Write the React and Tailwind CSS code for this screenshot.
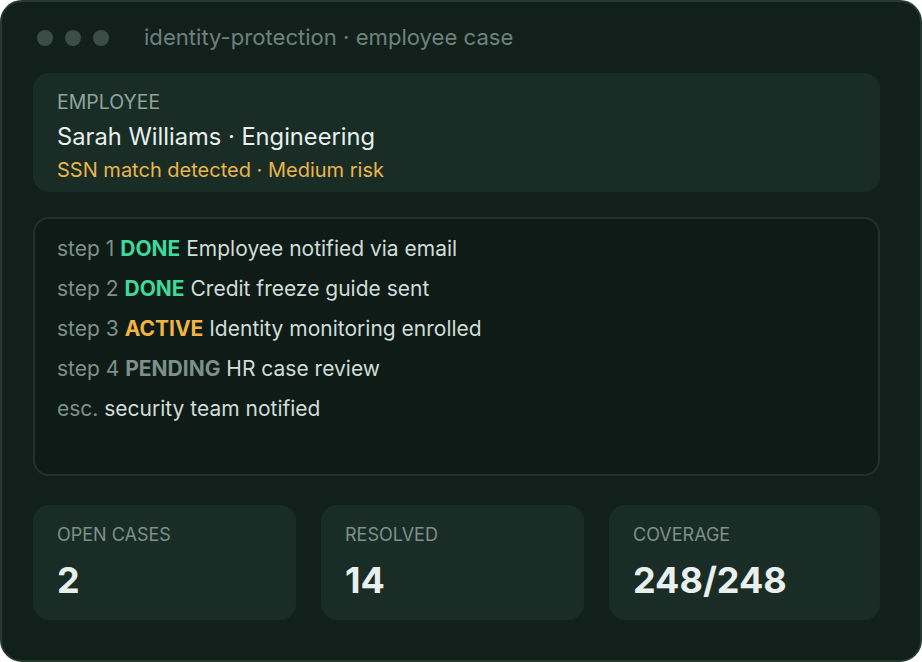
export default function App() {
  const steps = [
    { tag: "step 1", status: "DONE", tone: "text-[#3fd99a]", text: "Employee notified via email" },
    { tag: "step 2", status: "DONE", tone: "text-[#3fd99a]", text: "Credit freeze guide sent" },
    { tag: "step 3", status: "ACTIVE", tone: "text-[#f2b544]", text: "Identity monitoring enrolled" },
    { tag: "step 4", status: "PENDING", tone: "text-[#7c918a]", text: "HR case review" },
    { tag: "esc.", status: null, tone: "", text: "security team notified" },
  ];
  const stats = [
    { label: "OPEN CASES", value: "2" },
    { label: "RESOLVED", value: "14" },
    { label: "COVERAGE", value: "248/248" },
  ];
  return (
    <div className="w-[922px] h-[662px] bg-white font-['Inter',sans-serif]">
      <div className="w-full h-full rounded-[22px] border-2 border-[#25392f] bg-[#11201b] pl-[31px] pr-[40px] flex flex-col">
        {/* window chrome */}
        <div className="h-[71px] flex items-center">
          <div className="flex gap-[12px] pl-[4px]">
            <span className="w-[16px] h-[16px] rounded-full bg-[#3a4d47]" />
            <span className="w-[16px] h-[16px] rounded-full bg-[#3a4d47]" />
            <span className="w-[16px] h-[16px] rounded-full bg-[#3a4d47]" />
          </div>
          <span className="ml-[35px] text-[22.1px] text-[#6d827b]">identity-protection · employee case</span>
        </div>

        {/* employee summary */}
        <div className="h-[119px] rounded-[16px] bg-[#192c26] px-[24px] pt-[17px]">
          <div className="text-[19.5px] leading-[24px] text-[#8fa39b]">EMPLOYEE</div>
          <div className="mt-[7px] text-[23.7px] leading-[32px] text-[#e8efec]">Sarah Williams · Engineering</div>
          <div className="mt-[4px] text-[20px] leading-[26px] text-[#eab54a]">SSN match detected · Medium risk</div>
        </div>

        {/* case steps */}
        <div className="mt-[25px] h-[259px] rounded-[16px] border-2 border-[#1f332c] bg-[#0e1b17] px-[22px] pt-[10px]">
          {steps.map((s) => (
            <div key={s.tag} className="text-[21px] leading-[40px] text-[#d1ddd8] whitespace-nowrap">
              <span className="text-[#7c918a]">{s.tag}</span>{" "}
              {s.status && <><span className={`font-bold ${s.tone}`}>{s.status}</span>{" "}</>}
              {s.text}
            </div>
          ))}
        </div>

        {/* stats */}
        <div className="mt-[29px] grid grid-cols-[263px_263px_1fr] gap-x-[25px]">
          {stats.map((s) => (
            <div key={s.label} className="h-[115px] rounded-[16px] bg-[#192c26] px-[24px] pt-[18px]">
              <div className="text-[18px] leading-[24px] text-[#7c918a]">{s.label}</div>
              <div className="mt-[13px] text-[36px] leading-[40px] font-bold text-[#e8efec]">{s.value}</div>
            </div>
          ))}
        </div>
      </div>
    </div>
  );
}
